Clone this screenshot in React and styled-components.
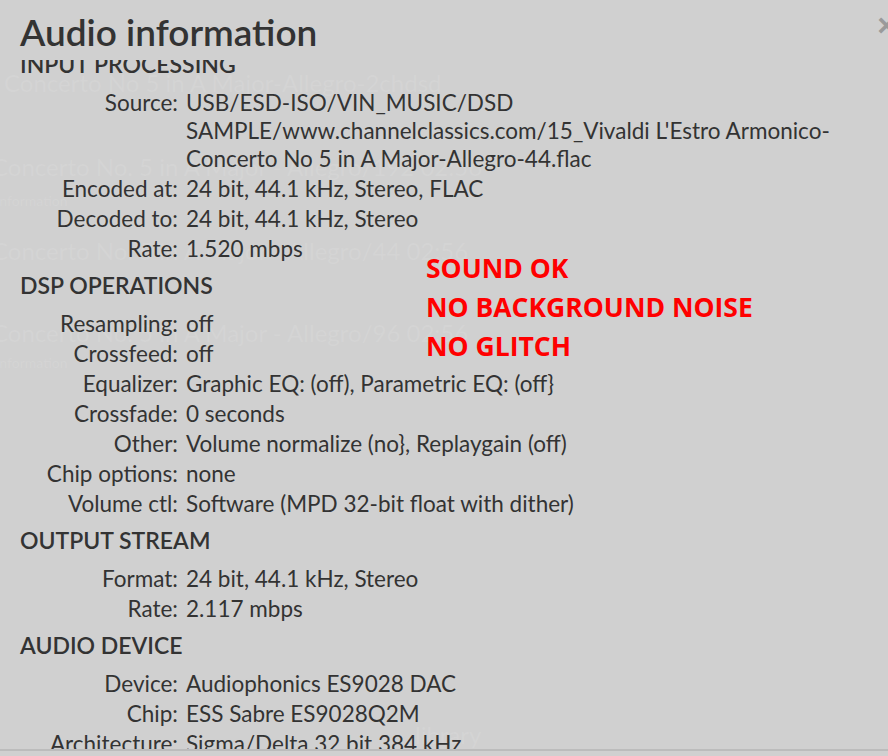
import React, { useLayoutEffect, useRef } from "react"
import styled, { createGlobalStyle } from "styled-components"

const GlobalStyle = createGlobalStyle`
  html, body {
    margin: 0;
    padding: 0;
    background: #d0d0d0;
    font-family: Lato, "Open Sans", sans-serif;
    color: #333;
  }
`

const Modal = styled.div`
  position: relative;
  width: 888px;
  height: 756px;
  display: flex;
  flex-direction: column;
  overflow: hidden;
  background: #d0d0d0;
`

// faint text of the page behind the modal
const Ghost = styled.div`
  position: absolute;
  left: ${(p) => p.x}px;
  top: ${(p) => p.y}px;
  font-size: ${(p) => p.size || 24}px;
  color: rgba(255, 255, 255, 0.1);
  white-space: nowrap;
  pointer-events: none;
`

const Header = styled.div`
  position: relative;
  height: 60px;
  flex: none;
  padding: 0 20px;
  display: flex;
  align-items: center;
`

const Title = styled.h3`
  margin: 0;
  padding-top: 3px;
  font-size: 37px;
  font-weight: 600;
  color: #333;
`

const Close = styled.span`
  position: absolute;
  top: 7px;
  right: -8px;
  font-size: 32px;
  font-weight: 700;
  color: #9a9a9a;
  font-family: "Liberation Sans", Arial, sans-serif;
`

const Body = styled.div`
  position: relative;
  flex: 1;
  overflow: hidden;
  padding: 0 20px;
`

const Heading = styled.h4`
  margin: 8px 0 11px;
  line-height: 28px;
  font-size: 23px;
  font-weight: 600;
  color: #333;
`

const Row = styled.div`
  display: grid;
  grid-template-columns: 158px 1fr;
  column-gap: 8px;
  margin-bottom: 2px;
  font-size: 22.5px;
  line-height: 28px;
`

const Label = styled.span`
  text-align: right;
  white-space: nowrap;
`

const Value = styled.span``

const Note = styled.div`
  position: absolute;
  left: 426px;
  top: 249px;
  font-family: "Open Sans", sans-serif;
  font-weight: 700;
  font-size: 26.5px;
  line-height: 39px;
  color: #ff0000;
`

const Footer = styled.div`
  flex: none;
  height: 5px;
  border-top: 2px solid #bcbcbc;
`

const sections = [
  {
    title: "INPUT PROCESSING",
    rows: [
      ["Source", "USB/ESD-ISO/VIN_MUSIC/DSD SAMPLE/www.channelclassics.com/15_Vivaldi L'Estro Armonico-Concerto No 5 in A Major-Allegro-44.flac"],
      ["Encoded at", "24 bit, 44.1 kHz, Stereo, FLAC"],
      ["Decoded to", "24 bit, 44.1 kHz, Stereo"],
      ["Rate", "1.520 mbps"],
    ],
  },
  {
    title: "DSP OPERATIONS",
    rows: [
      ["Resampling", "off"],
      ["Crossfeed", "off"],
      ["Equalizer", "Graphic EQ: (off), Parametric EQ: (off}"],
      ["Crossfade", "0 seconds"],
      ["Other", "Volume normalize (no}, Replaygain (off)"],
      ["Chip options", "none"],
      ["Volume ctl", "Software (MPD 32-bit float with dither)"],
    ],
  },
  {
    title: "OUTPUT STREAM",
    rows: [
      ["Format", "24 bit, 44.1 kHz, Stereo"],
      ["Rate", "2.117 mbps"],
    ],
  },
  {
    title: "AUDIO DEVICE",
    rows: [
      ["Device", "Audiophonics ES9028 DAC"],
      ["Chip", "ESS Sabre ES9028Q2M"],
      ["Architecture", "Sigma/Delta 32 bit 384 kHz"],
      ["Formats", "PCM 16/24/32 bit, DSD64/128/256"],
    ],
  },
]

const ghosts = [
  { x: 4, y: 68, text: "Concerto No 5 in A Major-Allegro-2chdsd" },
  { x: -8, y: 152, text: "Concerto No. 5 in A Major - Allegro/192 02:56" },
  { x: -4, y: 192, size: 14, text: "information" },
  { x: -8, y: 236, text: "Concerto No. 5 in A Major - Allegro/44 02:56" },
  { x: -8, y: 318, text: "Concerto No. 5 in A Major - Allegro/96 02:56" },
  { x: -4, y: 354, size: 14, text: "information" },
  { x: 415, y: 720, text: "library" },
]

const App = () => {
  const bodyRef = useRef(null)

  useLayoutEffect(() => {
    if (bodyRef.current) bodyRef.current.scrollTop = 18
  }, [])

  return (
    <>
      <GlobalStyle />
      <Modal>
        {ghosts.map((g, i) => (
          <Ghost key={i} x={g.x} y={g.y} size={g.size}>{g.text}</Ghost>
        ))}
        <Header>
          <Title>Audio information</Title>
          <Close>×</Close>
        </Header>
        <Body ref={bodyRef}>
          {sections.map((s) => (
            <div key={s.title}>
              <Heading>{s.title}</Heading>
              {s.rows.map(([label, value]) => (
                <Row key={label}>
                  <Label>{label}:</Label>
                  <Value>{value}</Value>
                </Row>
              ))}
            </div>
          ))}
        </Body>
        <Footer />
        <Note>
          SOUND OK<br />
          NO BACKGROUND NOISE<br />
          NO GLITCH
        </Note>
      </Modal>
    </>
  )
}

export default App
